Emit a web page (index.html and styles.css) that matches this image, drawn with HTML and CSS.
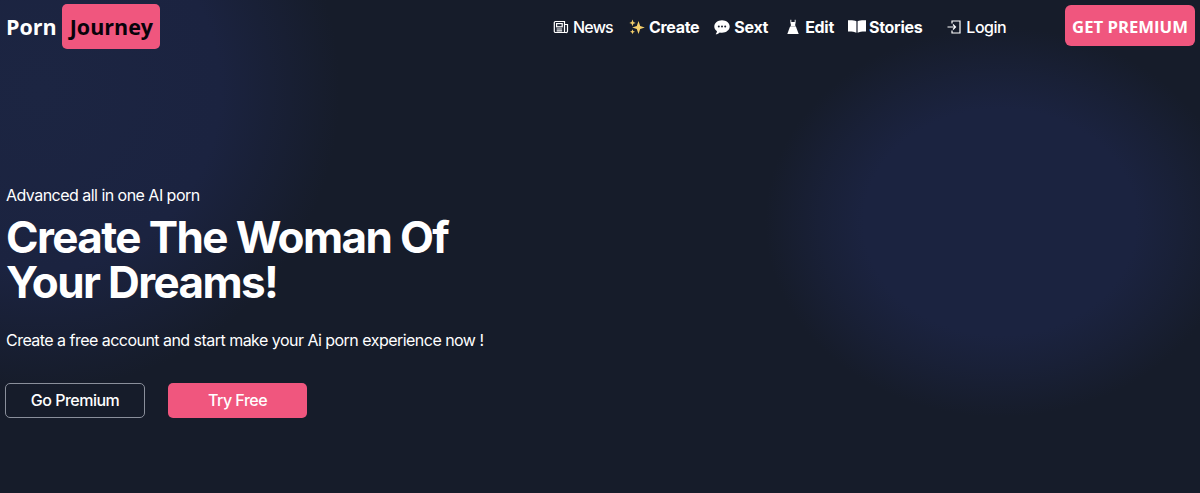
FILE: index.html
```html
<!DOCTYPE html>
<html lang="en">
<head>
    <meta charset="UTF-8">
    <meta name="viewport" content="width=device-width, initial-scale=1.0">
    <title>Porn Journey</title>
    <link rel="stylesheet" href="styles.css">
</head>
<body>
    <div class="page">
        <header class="top">
            <a class="logo" href="#">
                <span class="logo-a">Porn</span>
                <span class="logo-b">Journey</span>
            </a>
            <nav class="nav">
                <a class="nav-item thin news" href="#">
                    <svg class="ico" viewBox="0 0 16 16" fill="none" stroke="#fff" stroke-width="1.2"><path d="M3 2.500h8.500v11H2.500a1.200 1.200 0 0 1-1.200-1.200V3.600A1.100 1.100 0 0 1 2.400 2.500z"/><path d="M11.500 5.500h3v6.800a1.200 1.200 0 0 1-1.500 1.200h-1.500"/><rect x="3.600" y="4.600" width="5.600" height="3.200"/><path d="M3.600 10h5.600M3.600 11.800h5.600"/></svg>
                    News
                </a>
                <a class="nav-item create" href="#">
                    <svg class="ico" viewBox="0 0 16 16" fill="#f5cf6b"><path d="M9.500 2 11.200 7l4.600 1.500L11.200 10l-1.700 5L7.800 10 3.200 8.500 7.800 7z"/><path d="M3.500.5 4.400 3l2.300.9-2.300.9-.9 2.400-.9-2.400L.3 3.900 2.600 3z"/><path d="M3.500 10.300l.7 1.800 1.800.7-1.800.7-.7 1.800-.7-1.800-1.800-.7 1.800-.7z"/></svg>
                    Create
                </a>
                <a class="nav-item sext" href="#">
                    <svg class="ico" viewBox="0 0 16 16"><path fill="#fff" d="M8 1.300c4.300 0 7.700 2.800 7.700 6.200S12.300 13.700 8 13.700c-.8 0-1.500-.1-2.200-.3-.9.800-2.300 1.700-4.100 1.900.7-.8 1.200-2 1.300-3C1.400 11.200.3 9.500.3 7.500.3 4.100 3.700 1.300 8 1.300z"/><g fill="#161c2a"><circle cx="4.800" cy="7.500" r="1"/><circle cx="8" cy="7.500" r="1"/><circle cx="11.200" cy="7.500" r="1"/></g></svg>
                    Sext
                </a>
                <a class="nav-item edit" href="#">
                    <svg class="ico" viewBox="0 0 16 16" fill="#fff"><path d="M6.300.8v2.200h3.400V.8h.9v2.800l-.5 2.700 1 1.500H5l1-1.500-.6-2.700V.8z"/><path d="M4.900 8h6.200l2.600 7H2.300z"/></svg>
                    Edit
                </a>
                <a class="nav-item stories" href="#">
                    <svg class="ico ico-book" viewBox="0.5 2 15 12.400" preserveAspectRatio="none" fill="#fff"><path d="M7.500 3.200v11C6 13.300 3.500 12.800.5 12.900V2.300c3-.2 5.500.1 7 .9z"/><path d="M8.500 3.200v11c1.500-.9 4-1.400 7-1.300V2.300c-3-.2-5.500.1-7 .9z"/></svg>
                    Stories
                </a>
                <a class="nav-item thin login" href="#">
                    <svg class="ico" viewBox="0 0 16 16" fill="none" stroke="#fff" stroke-width="1.200"><path d="M6 4.500V2h8v12H6v-2.500"/><path d="M1.500 8h8M7 5.500 9.500 8 7 10.500"/></svg>
                    Login
                </a>
            </nav>
            <a class="premium" href="#">GET PREMIUM</a>
        </header>
        <section class="hero">
            <p class="kicker">Advanced all in one AI porn</p>
            <h1 class="title">Create The Woman Of<br>Your Dreams!</h1>
            <p class="sub">Create a free account and start make your Ai porn experience now !</p>
            <div class="buttons">
                <a class="btn btn-line" href="#">Go Premium</a>
                <a class="btn btn-pink" href="#">Try Free</a>
            </div>
        </section>
    </div>
</body>
</html>
```

FILE: styles.css
```css
* {
    margin: 0;
    padding: 0;
    box-sizing: border-box;
}
html, body {
    height: 100%;
}
body {
    background-color: #161c2a;
    color: #fff;
    font-family: Inter, "Liberation Sans", sans-serif;
    overflow: hidden;
}
a {
    color: inherit;
    text-decoration: none;
}
.page {
    height: 493px;
    background-image:
        radial-gradient(ellipse 235px 195px at 1000px 222px, #1b2340 0%, #1b2340 58%, rgba(27, 35, 64, 0.6) 76%, rgba(27, 35, 64, 0) 100%),
        radial-gradient(circle 300px at 40px 90px, #1c2542 0%, #1b2340 60%, rgba(27, 35, 64, 0.5) 80%, rgba(27, 35, 64, 0) 100%);
}
.top {
    display: flex;
    align-items: center;
    padding: 4px 5px 0 6px;
}
.logo {
    display: flex;
    align-items: center;
    gap: 5px;
    font-family: "Open Sans", "Noto Sans", sans-serif;
    font-size: 21.5px;
    font-weight: 700;
    width: 547px;
}
.logo-b {
    background-color: #f0567e;
    color: #08030a;
    border-radius: 5px;
    padding: 6px 7px 6px 8px;
    line-height: 33px;
    height: 45px;
}
.nav {
    display: flex;
    align-items: center;
    width: 512px;
    font-size: 16px;
    font-weight: 700;
}
.nav-item {
    display: flex;
    align-items: center;
    gap: 4px;
    letter-spacing: -0.3px;
}
.thin {
    font-weight: 500;
    letter-spacing: -0.5px;
}
.news {
    letter-spacing: -0.8px;
}
.ico {
    width: 16px;
    height: 16px;
    flex: none;
}
.ico-book {
    width: 18px;
    height: 13px;
    margin-right: -1px;
}
.create { margin-left: 16px; }
.sext { margin-left: 15px; }
.edit { margin-left: 17px; }
.stories { margin-left: 14px; }
.login { margin-left: 24px; }
.premium {
    background-color: #f0567e;
    font-family: "Open Sans", "Noto Sans", sans-serif;
    font-size: 16.7px;
    font-weight: 700;
    border-radius: 6px;
    width: 130px;
    height: 41px;
    line-height: 43px;
    text-align: center;
    margin-top: -3px;
    white-space: nowrap;
}
.hero {
    padding: 136px 0 0 6px;
}
.kicker {
    font-size: 16px;
    line-height: 20px;
    letter-spacing: -0.53px;
}
.title {
    font-size: 44px;
    line-height: 45px;
    font-weight: 700;
    letter-spacing: -1.6px;
    margin-top: 10px;
}
.sub {
    font-size: 16px;
    line-height: 22px;
    margin-top: 24px;
    letter-spacing: -0.53px;
}
.buttons {
    display: flex;
    gap: 23px;
    margin: 32px 0 0 -1px;
}
.btn {
    display: block;
    width: 139px;
    height: 35px;
    line-height: 33px;
    text-align: center;
    font-size: 16px;
    font-weight: 500;
    border-radius: 5px;
    letter-spacing: -0.5px;
}
.btn-line {
    width: 140px;
    border: 1px solid #8a8f9b;
}
.btn-pink {
    background-color: #f0567e;
    line-height: 35px;
}
```
